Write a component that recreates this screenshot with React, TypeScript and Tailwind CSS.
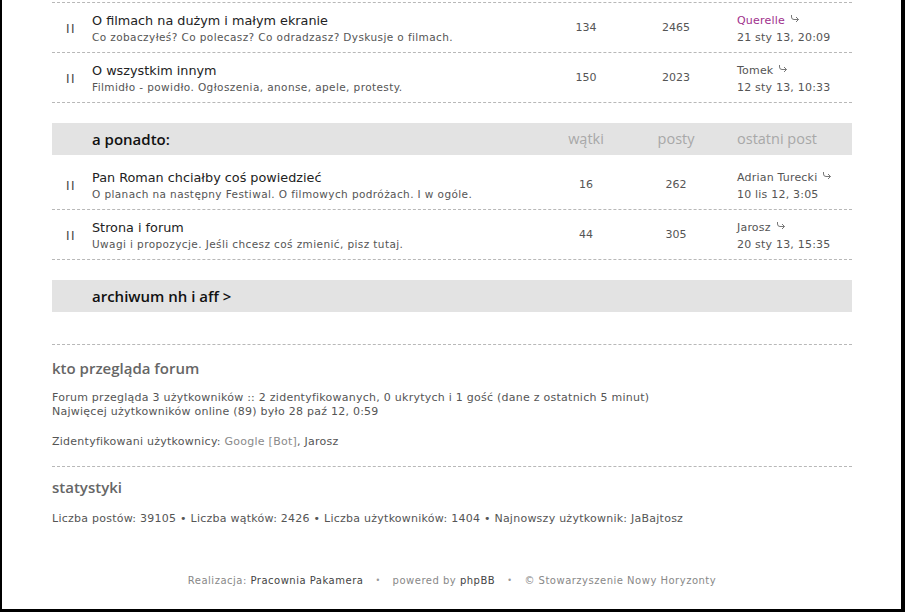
import React from "react";

type Forum = {
  title: string;
  desc: string;
  topics: number;
  posts: number;
  author: string;
  authorColor?: string;
  date: string;
};

const mainForums: Forum[] = [
  {
    title: "O filmach na dużym i małym ekranie",
    desc: "Co zobaczyłeś? Co polecasz? Co odradzasz? Dyskusje o filmach.",
    topics: 134,
    posts: 2465,
    author: "Querelle",
    authorColor: "text-[#a0308c]",
    date: "21 sty 13, 20:09",
  },
  {
    title: "O wszystkim innym",
    desc: "Filmidło - powidło. Ogłoszenia, anonse, apele, protesty.",
    topics: 150,
    posts: 2023,
    author: "Tomek",
    date: "12 sty 13, 10:33",
  },
];

const otherForums: Forum[] = [
  {
    title: "Pan Roman chciałby coś powiedzieć",
    desc: "O planach na następny Festiwal. O filmowych podróżach. I w ogóle.",
    topics: 16,
    posts: 262,
    author: "Adrian Turecki",
    date: "10 lis 12, 3:05",
  },
  {
    title: "Strona i forum",
    desc: "Uwagi i propozycje. Jeśli chcesz coś zmienić, pisz tutaj.",
    topics: 44,
    posts: 305,
    author: "Jarosz",
    date: "20 sty 13, 15:35",
  },
];

// single family names only — comma lists didn't resolve in the build
const body = "font-['DejaVu_Sans']";
const head = "font-['Open_Sans']";
const cols = "grid grid-cols-[40px_449px_90px_90px_1fr]";

function GoIcon() {
  return (
    <svg width="10" height="9" viewBox="0 0 10 9" className="ml-[5px] inline-block align-[1px]" fill="none">
      <path d="M1.5 1v2a2.5 2.5 0 0 0 2.5 2.5h4.5" stroke="#777" strokeWidth="1" />
      <path d="M6 3l2.5 2.5L6 8" stroke="#777" strokeWidth="1" />
    </svg>
  );
}

function ForumRow({ forum }: { forum: Forum }) {
  return (
    <div className={`${cols} h-[50px] items-center border-b border-dashed border-[#b8b8b8] ${body} text-[#555]`}>
      <div className="pl-[14px] pt-[2px] text-[12px] tracking-[1.5px] text-[#444]">II</div>
      <div className="flex flex-col pt-[1px]">
        <div className="text-[12.8px] leading-[16px] text-[#222]">{forum.title}</div>
        <div className="mt-[1px] text-[10.5px] leading-[14px] tracking-[0.4px]">{forum.desc}</div>
      </div>
      <div className="pt-[2px] text-center text-[11px]">{forum.topics}</div>
      <div className="pt-[2px] text-center text-[11px]">{forum.posts}</div>
      <div className="flex flex-col pl-[16px] pt-[3px] text-[11px] leading-[17px] tracking-[0.2px]">
        <div className={forum.authorColor ?? "text-[#555]"}>
          {forum.author}
          <GoIcon />
        </div>
        <div>{forum.date}</div>
      </div>
    </div>
  );
}

export default function App() {
  return (
    <div className="h-[612px] w-[905px] overflow-hidden border-b-[3px] border-l-[2px] border-r-[4px] border-black bg-white">
      <div className="ml-[50px] w-[800px]">
        <div className="mt-[2px] border-t border-dashed border-[#b8b8b8]" />
        {mainForums.map((f) => (
          <ForumRow key={f.title} forum={f} />
        ))}

        <div className={`${cols} mt-[20px] h-[32px] items-center bg-[#e3e3e3] ${head}`}>
          <div />
          <div className="text-[15px] font-semibold text-[#111]">a ponadto:</div>
          <div className="text-center text-[14.5px] text-[#a8a8a8]">wątki</div>
          <div className="text-center text-[14.5px] text-[#a8a8a8]">posty</div>
          <div className="pl-[16px] text-[14.5px] text-[#a8a8a8]">ostatni post</div>
        </div>
        <div className="mt-[5px]">
          {otherForums.map((f) => (
            <ForumRow key={f.title} forum={f} />
          ))}
        </div>

        <div className={`mt-[20px] flex h-[32px] items-center bg-[#e3e3e3] pl-[40px] ${head} text-[15px] font-semibold text-[#111]`}>
          archiwum nh i aff &gt;
        </div>

        <div className="mt-[32px] border-t border-dashed border-[#b8b8b8]" />
        <div className={`mt-[12px] ${head} text-[15px] font-semibold leading-[22px] text-[#666]`}>kto przegląda forum</div>
        <div className={`mt-[12px] ${body} text-[11px] leading-[14px] tracking-[0.25px] text-[#555]`}>
          <div>Forum przegląda 3 użytkowników :: 2 zidentyfikowanych, 0 ukrytych i 1 gość (dane z ostatnich 5 minut)</div>
          <div>Najwięcej użytkowników online (89) było 28 paź 12, 0:59</div>
          <div className="mt-[16px]">
            Zidentyfikowani użytkownicy: <span className="text-[#8a8a8a]">Google [Bot]</span>, Jarosz
          </div>
        </div>

        <div className="mt-[17px] border-t border-dashed border-[#b8b8b8]" />
        <div className={`mt-[9px] ${head} text-[15px] font-semibold leading-[22px] text-[#666]`}>statystyki</div>
        <div className={`mt-[14px] ${body} text-[11px] leading-[14px] tracking-[0.25px] text-[#555]`}>
          Liczba postów: 39105 • Liczba wątków: 2426 • Liczba użytkowników: 1404 • Najnowszy użytkownik: JaBajtosz
        </div>

        <div className={`mt-[47px] flex items-center justify-center gap-[12px] ${body} text-[10px] tracking-[0.5px] text-[#888]`}>
          <span>
            Realizacja: <span className="text-[#444]">Pracownia Pakamera</span>
          </span>
          <span className="text-[8px] text-[#999]">•</span>
          <span>
            powered by <span className="text-[#444]">phpBB</span>
          </span>
          <span className="text-[8px] text-[#999]">•</span>
          <span>© Stowarzyszenie Nowy Horyzonty</span>
        </div>
      </div>
    </div>
  );
}
